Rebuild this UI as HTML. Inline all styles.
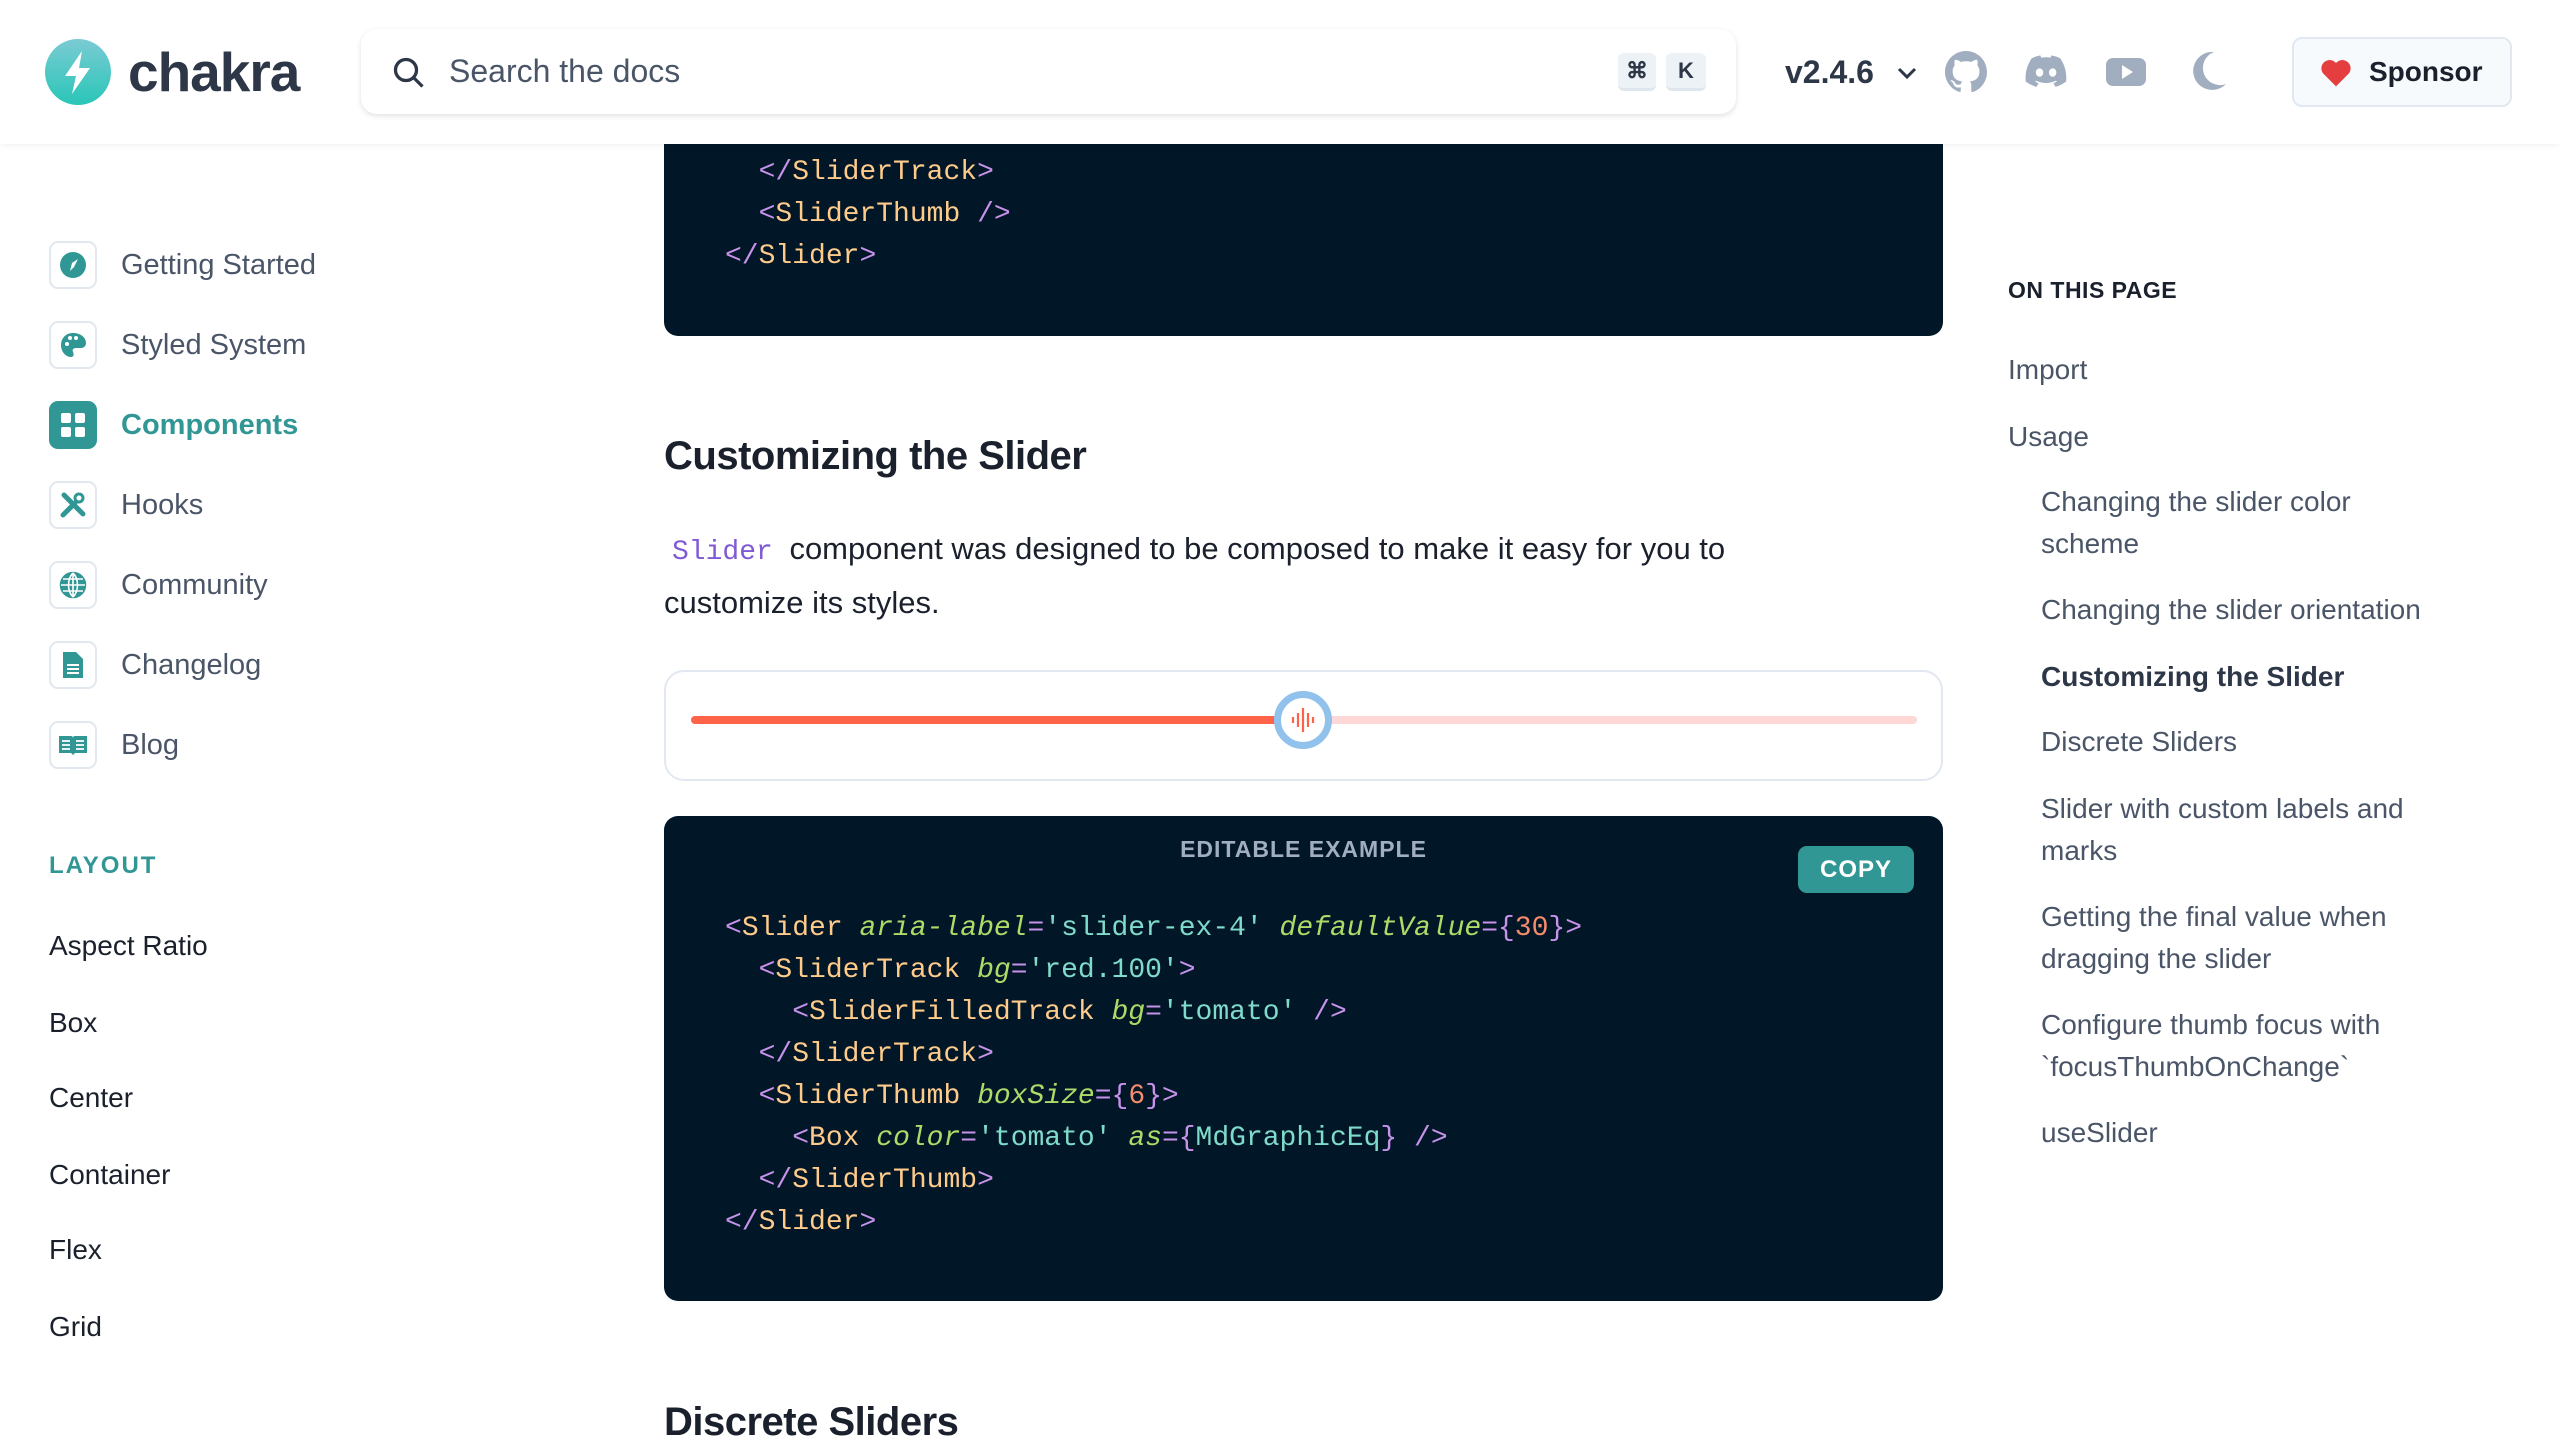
<!DOCTYPE html>
<html><head><meta charset="utf-8"><style>
*{box-sizing:border-box;margin:0;padding:0}
body{width:2560px;height:1440px;overflow:hidden;background:#fff;font-family:"Liberation Sans",sans-serif;color:#1a202c;position:relative}
.abs{position:absolute}
header{position:absolute;left:0;top:0;width:2560px;height:144px;background:#fff;box-shadow:0 2px 6px rgba(0,0,0,.05);z-index:5}
.search{left:361px;top:29px;width:1375px;height:85px;border-radius:16px;box-shadow:0 2px 6px rgba(0,0,0,.12);background:#fff}
.kbd{top:24px;height:38px;border-radius:6px;background:#edf2f7;border-bottom:3px solid #dfe6ee;color:#2d3748;font-size:22px;text-align:center;line-height:36px;font-weight:bold}
.nav{left:49px;font-size:29px;color:#4a5568;display:flex;align-items:center;height:48px}
.ib{width:48px;height:48px;border:2px solid #e2e8f0;border-radius:9px;margin-right:24px;display:flex;align-items:center;justify-content:center}
.ll{left:49px;font-size:28px;color:#1a202c;line-height:40px}
.code{background:#011627;border-radius:14px;font-family:"Liberation Mono",monospace;font-size:28px;line-height:42px;color:#d6deeb;white-space:pre}
.p{color:#c792ea}.t{color:#ffcb8b}.a{color:#addb67;font-style:italic}.s{color:#7fdbca}.n{color:#f78c6c}
.toc{font-size:28px;color:#4a5568;line-height:42px}
</style></head><body>
<header>
 <svg class="abs" style="left:45px;top:39px" width="66" height="66" viewBox="0 0 66 66"><defs><linearGradient id="g" x1="0" y1="0" x2="0" y2="1"><stop offset="0" stop-color="#7bcbd4"/><stop offset="1" stop-color="#29c6b7"/></linearGradient></defs><circle cx="33" cy="33" r="33" fill="url(#g)"/><path d="M37 12 L20 37 H31 L27 55 L45 29 H34 Z" fill="#fff"/></svg>
 <div class="abs" style="left:128px;top:40px;font-size:55px;font-weight:bold;color:#2d3748;letter-spacing:-1px">chakra</div>
 <div class="abs search">
  <svg class="abs" style="left:30px;top:26px" width="36" height="36" viewBox="0 0 24 24" fill="none" stroke="#2d3748" stroke-width="2.2"><circle cx="10" cy="10" r="7"/><path d="M15 15 L21 21"/></svg>
  <div class="abs" style="left:88px;top:24px;font-size:32px;color:#4a5568">Search the docs</div>
  <div class="abs kbd" style="left:1257px;width:38px">⌘</div>
  <div class="abs kbd" style="left:1305px;width:40px">K</div>
 </div>
 <div class="abs" style="left:1785px;top:54px;font-size:32px;font-weight:bold;color:#2d3748">v2.4.6</div>
 <svg class="abs" style="left:1896px;top:65px" width="22" height="16" viewBox="0 0 22 16" fill="none" stroke="#2d3748" stroke-width="3"><path d="M3 4 L11 12 L19 4"/></svg>
 <svg class="abs" style="left:1945px;top:51px" width="42" height="42" viewBox="0 0 16 16" fill="#a0aec0"><path d="M8 0C3.58 0 0 3.58 0 8c0 3.54 2.290 6.53 5.47 7.59.4.07.55-.17.55-.38v-1.33c-2.230.48-2.7-1.070-2.7-1.070-.36-.92-.89-1.170-.89-1.170-.73-.5.06-.49.06-.49.8.06 1.23.83 1.23.83.71 1.22 1.870.87 2.330.66.07-.52.28-.87.51-1.070-1.780-.2-3.640-.89-3.640-3.950 0-.87.31-1.590.82-2.150-.08-.2-.36-1.020.08-2.120 0 0 .67-.21 2.2.82a7.6 7.6 0 0 1 4 0c1.53-1.040 2.2-.82 2.2-.82.44 1.1.16 1.920.08 2.120.51.56.82 1.270.82 2.150 0 3.070-1.870 3.750-3.650 3.950.29.25.54.73.54 1.480v2.2c0 .21.15.46.55.38A8 8 0 0 0 16 8c0-4.420-3.580-8-8-8z"/></svg>
 <svg class="abs" style="left:2025px;top:55px" width="42" height="34" viewBox="0 0 24 19" fill="#a0aec0"><path d="M20 1.6A19.7 19.7 0 0 0 15.2 0l-.6 1.3a18 18 0 0 0-5.3 0L8.7 0A19.7 19.7 0 0 0 3.9 1.6C.9 6.1 0 10.5.4 14.9A19.9 19.9 0 0 0 6.5 18l1.3-2.1c-.7-.3-1.4-.6-2-1l.5-.4a14 14 0 0 0 11.4 0l.5.4c-.6.4-1.3.7-2 1L17.5 18a19.8 19.8 0 0 0 6-3.1c.5-5.1-.8-9.5-3.5-13.3zM8.3 12.2c-1.2 0-2.1-1.1-2.1-2.4s.9-2.4 2.1-2.4 2.2 1.1 2.1 2.4c0 1.3-.9 2.4-2.1 2.4zm7.5 0c-1.2 0-2.1-1.1-2.1-2.4s.9-2.4 2.1-2.4 2.2 1.1 2.1 2.4c0 1.3-.9 2.4-2.1 2.4z"/></svg>
 <svg class="abs" style="left:2106px;top:55px" width="40" height="34" viewBox="0 0 40 34"><rect x="0" y="3" width="40" height="28" rx="7" fill="#a0aec0"/><path d="M16 10 L27 17 L16 24Z" fill="#fff"/></svg>
 <svg class="abs" style="left:2192px;top:50px" width="36" height="40" viewBox="0 0 36 40"><path d="M22 2 A19 19 0 1 0 34 34 A17 17 0 0 1 22 2Z" fill="#a0aec0"/></svg>
 <div class="abs" style="left:2292px;top:37px;width:220px;height:70px;border:2px solid #e2e8f0;border-radius:10px;background:#f7fafc"></div>
 <svg class="abs" style="left:2320px;top:58px" width="32" height="30" viewBox="0 0 24 22"><path d="M12 21 L2.5 11.5 A5.5 5.5 0 0 1 12 3.5 A5.5 5.5 0 0 1 21.5 11.5Z" fill="#e53e3e"/></svg>
 <div class="abs" style="left:2369px;top:56px;font-size:28px;font-weight:bold;color:#1a202c">Sponsor</div>
</header>

<!-- sidebar -->
<div class="abs nav" style="top:241px"><div class="ib"><svg width="28" height="28" viewBox="0 0 28 28"><circle cx="14" cy="14" r="13" fill="#319795"/><path d="M19 8 L15 16 L11 20 L13 12Z" fill="#fff"/></svg></div>Getting Started</div>
<div class="abs nav" style="top:321px"><div class="ib"><svg width="28" height="28" viewBox="0 0 28 28"><path d="M14 2C6 2 2 8 2 14c0 7 5 12 10 12 3 0 3-3 2-5-1-2 0-4 3-4h5c3 0 5-2 5-5C27 6 21 2 14 2z" fill="#319795"/><circle cx="8" cy="13" r="2" fill="#fff"/><circle cx="11" cy="7" r="2" fill="#fff"/><circle cx="17" cy="7" r="2" fill="#fff"/></svg></div>Styled System</div>
<div class="abs nav" style="top:401px;color:#319795;font-weight:bold"><div class="ib" style="background:#319795;border-color:#319795"><svg width="26" height="26" viewBox="0 0 26 26" fill="#fff"><rect x="1" y="1" width="10" height="10" rx="2"/><rect x="15" y="1" width="10" height="10" rx="2"/><rect x="1" y="15" width="10" height="10" rx="2"/><rect x="15" y="15" width="10" height="10" rx="2"/></svg></div>Components</div>
<div class="abs nav" style="top:481px"><div class="ib"><svg width="30" height="30" viewBox="0 0 30 30" stroke="#319795" stroke-width="5" stroke-linecap="round" fill="none"><path d="M5 25 L17 13"/><path d="M6 5 L25 24"/><circle cx="21" cy="8" r="4" stroke-width="3"/></svg></div>Hooks</div>
<div class="abs nav" style="top:561px"><div class="ib"><svg width="28" height="28" viewBox="0 0 28 28" fill="none" stroke="#319795" stroke-width="2.5"><circle cx="14" cy="14" r="12" fill="#319795"/><path d="M2 14H26M14 2V26M14 2C8 8 8 20 14 26M14 2C20 8 20 20 14 26M4 8H24M4 20H24" stroke="#fff" stroke-width="1.6"/></svg></div>Community</div>
<div class="abs nav" style="top:641px"><div class="ib"><svg width="24" height="28" viewBox="0 0 24 28"><path d="M2 1H15L22 8V27H2Z" fill="#319795"/><path d="M6 14H18M6 18H18M6 22H18" stroke="#fff" stroke-width="2"/></svg></div>Changelog</div>
<div class="abs nav" style="top:721px"><div class="ib"><svg width="30" height="22" viewBox="0 0 30 22"><path d="M1 2H13Q15 2 15 4Q15 2 17 2H29V19H17L15 21L13 19H1Z" fill="#319795"/><path d="M4 7H12M4 11H12M4 15H12M18 7H26M18 11H26M18 15H26" stroke="#fff" stroke-width="1.8"/></svg></div>Blog</div>
<div class="abs" style="left:49px;top:852px;font-size:24px;font-weight:bold;color:#319795;letter-spacing:2px">LAYOUT</div>
<div class="abs ll" style="top:926px">Aspect Ratio</div>
<div class="abs ll" style="top:1003px">Box</div>
<div class="abs ll" style="top:1078px">Center</div>
<div class="abs ll" style="top:1155px">Container</div>
<div class="abs ll" style="top:1230px">Flex</div>
<div class="abs ll" style="top:1307px">Grid</div>

<!-- main -->
<div class="abs code" style="left:664px;top:100px;width:1279px;height:236px;border-radius:0 0 14px 14px;padding:52px 0 0 61px">  <span class="p">&lt;/</span><span class="t">SliderTrack</span><span class="p">&gt;</span>
  <span class="p">&lt;</span><span class="t">SliderThumb</span> <span class="p">/&gt;</span>
<span class="p">&lt;/</span><span class="t">Slider</span><span class="p">&gt;</span></div>
<div class="abs" style="left:664px;top:434px;font-size:40px;font-weight:bold;color:#1a202c;letter-spacing:-0.5px">Customizing the Slider</div>
<div class="abs" style="left:664px;top:522px;width:1180px;font-size:31px;line-height:54px;color:#1a202c"><span style="font-family:'Liberation Mono',monospace;color:#805ad5;font-size:28px;line-height:20px;padding:0 8px">Slider</span> component was designed to be composed to make it easy for you to customize its styles.</div>
<div class="abs" style="left:664px;top:670px;width:1279px;height:111px;border:2px solid #e2e8f0;border-radius:20px"></div>
<div class="abs" style="left:691px;top:716px;width:1226px;height:8px;border-radius:4px;background:#fed7d7"></div>
<div class="abs" style="left:691px;top:716px;width:612px;height:8px;border-radius:4px;background:#ff6347"></div>
<div class="abs" style="left:1274px;top:691px;width:58px;height:58px;border-radius:50%;background:#fff;border:7px solid #90c2ec"></div>
<svg class="abs" style="left:1290px;top:707px" width="26" height="26" viewBox="0 0 26 26" stroke="#ff6347" stroke-width="2.2"><path d="M3 10V16M8 6V20M13 1V25M18 6V20M23 10V16"/></svg>

<div class="abs code" style="left:664px;top:816px;width:1279px;height:485px;padding:92px 0 0 61px"><span class="p">&lt;</span><span class="t">Slider</span> <span class="a">aria-label</span><span class="p">=</span><span class="s">'slider-ex-4'</span> <span class="a">defaultValue</span><span class="p">={</span><span class="n">30</span><span class="p">}&gt;</span>
  <span class="p">&lt;</span><span class="t">SliderTrack</span> <span class="a">bg</span><span class="p">=</span><span class="s">'red.100'</span><span class="p">&gt;</span>
    <span class="p">&lt;</span><span class="t">SliderFilledTrack</span> <span class="a">bg</span><span class="p">=</span><span class="s">'tomato'</span> <span class="p">/&gt;</span>
  <span class="p">&lt;/</span><span class="t">SliderTrack</span><span class="p">&gt;</span>
  <span class="p">&lt;</span><span class="t">SliderThumb</span> <span class="a">boxSize</span><span class="p">={</span><span class="n">6</span><span class="p">}&gt;</span>
    <span class="p">&lt;</span><span class="t">Box</span> <span class="a">color</span><span class="p">=</span><span class="s">'tomato'</span> <span class="a">as</span><span class="p">={</span><span class="s">MdGraphicEq</span><span class="p">}</span> <span class="p">/&gt;</span>
  <span class="p">&lt;/</span><span class="t">SliderThumb</span><span class="p">&gt;</span>
<span class="p">&lt;/</span><span class="t">Slider</span><span class="p">&gt;</span></div>
<div class="abs" style="left:664px;top:836px;width:1279px;text-align:center;font-size:23px;font-weight:bold;color:#a0aec0;letter-spacing:1px">EDITABLE EXAMPLE</div>
<div class="abs" style="left:1798px;top:846px;width:116px;height:47px;border-radius:9px;background:#319795;color:#fff;font-size:24px;font-weight:bold;text-align:center;line-height:47px;letter-spacing:1px">COPY</div>
<div class="abs" style="left:664px;top:1400px;font-size:40px;font-weight:bold;color:#1a202c;letter-spacing:-0.5px">Discrete Sliders</div>

<!-- toc -->
<div class="abs" style="left:2008px;top:277px;font-size:23px;font-weight:bold;color:#1a202c;letter-spacing:0.5px">ON THIS PAGE</div>
<div class="abs toc" style="left:2008px;top:349px">Import</div>
<div class="abs toc" style="left:2008px;top:416px">Usage</div>
<div class="abs toc" style="left:2041px;top:481px">Changing the slider color<br>scheme</div>
<div class="abs toc" style="left:2041px;top:589px">Changing the slider orientation</div>
<div class="abs toc" style="left:2041px;top:656px;font-weight:bold;color:#2d3748">Customizing the Slider</div>
<div class="abs toc" style="left:2041px;top:721px">Discrete Sliders</div>
<div class="abs toc" style="left:2041px;top:788px">Slider with custom labels and<br>marks</div>
<div class="abs toc" style="left:2041px;top:896px">Getting the final value when<br>dragging the slider</div>
<div class="abs toc" style="left:2041px;top:1004px">Configure thumb focus with<br>`focusThumbOnChange`</div>
<div class="abs toc" style="left:2041px;top:1112px">useSlider</div>
</body></html>
